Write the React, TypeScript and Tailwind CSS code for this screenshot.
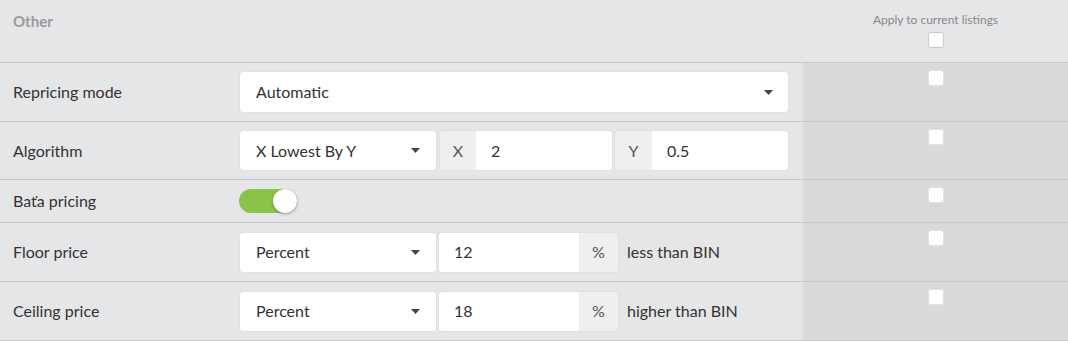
import React from "react";

const Caret = () => (
  <svg width="9" height="5" viewBox="0 0 9 5" className="shrink-0">
    <path d="M0 0 H9 L4.5 5 Z" fill="#444" />
  </svg>
);

const Check = ({ bordered = false }: { bordered?: boolean }) => (
  <div
    className={`w-[16px] h-[16px] rounded-[3px] bg-white ${
      bordered ? "border border-[#c9c9c9]" : "border border-[#e2e2e2]"
    }`}
  />
);

const Select = ({ value, w, h = "h-[41px]", pr = "pr-[15px]" }: { value: string; w: string; h?: string; pr?: string }) => (
  <div
    className={`${w} ${h} bg-white rounded-[4px] border border-[#e0e0e0] flex items-center justify-between pl-[16px] ${pr}`}
  >
    <span>{value}</span>
    <Caret />
  </div>
);

const Row = ({
  label,
  children,
  h = "h-[57px]",
  check = "pt-[7px]",
}: {
  label: string;
  children: React.ReactNode;
  h?: string;
  check?: string;
}) => (
  <div className={`flex border-b border-[#c7c8ca] ${h}`}>
    <div className="w-[239px] pl-[13px] flex items-center">{label}</div>
    <div className="w-[550px] flex items-center">{children}</div>
    <div className="w-[14px]" />
    <div className={`flex-1 bg-[#dadada] flex justify-center ${check}`}>
      <Check />
    </div>
  </div>
);

export default function App() {
  return (
    <div
      className="w-[1068px] h-[341px] bg-[#e5e6e8] text-[#333] text-[16px] overflow-hidden"
      style={{ fontFamily: "Lato, 'Open Sans', sans-serif" }}
    >
      <div className="flex h-[63px] border-b border-[#c7c8ca]">
        <div className="w-[803px] pl-[13px] pt-[10px] text-[15px] font-bold text-[#9a9a9a]">Other</div>
        <div className="flex-1 flex flex-col items-center pt-[12px]">
          <span className="text-[12px] text-[#888] leading-[16px]">Apply to current listings</span>
          <div className="mt-[4px]">
            <Check bordered />
          </div>
        </div>
      </div>

      <Row label="Repricing mode" h="h-[59px]">
        <Select value="Automatic" w="w-[550px]" h="h-[42px]" />
      </Row>

      <Row label="Algorithm" h="h-[58px]">
        <Select value="X Lowest By Y" w="w-[198px]" pr="pr-[16px]" />
        <div className="ml-[2px] flex h-[41px] w-[174px] rounded-[4px] overflow-hidden border border-[#e0e0e0]">
          <div className="w-[36px] bg-[#efefef] flex items-center justify-center text-[#555]">X</div>
          <div className="flex-1 bg-white flex items-center pl-[15px]">2</div>
        </div>
        <div className="ml-[1px] flex h-[41px] w-[175px] rounded-[4px] overflow-hidden border border-[#e0e0e0]">
          <div className="w-[37px] bg-[#efefef] flex items-center justify-center text-[#555]">Y</div>
          <div className="flex-1 bg-white flex items-center pl-[15px]">0.5</div>
        </div>
      </Row>

      <Row label="Baťa pricing" h="h-[43px]" check="pt-[7px]">
        <div className="w-[58px] h-[24px] rounded-full bg-[#8bc34a] flex justify-end">
          <div className="w-[24px] h-[24px] rounded-full bg-white shadow-[0_1px_3px_rgba(0,0,0,0.35)]" />
        </div>
      </Row>

      <Row label="Floor price" h="h-[59px]">
        <Select value="Percent" w="w-[198px]" pr="pr-[16px]" />
        <div className="ml-[1px] flex h-[41px] w-[181px] rounded-[4px] overflow-hidden border border-[#e0e0e0]">
          <div className="flex-1 bg-white flex items-center pl-[15px]">12</div>
          <div className="w-[39px] bg-[#efefef] flex items-center justify-center text-[#555]">%</div>
        </div>
        <span className="ml-[8px]">less than BIN</span>
      </Row>

      <Row label="Ceiling price" h="h-[59px]">
        <Select value="Percent" w="w-[198px]" pr="pr-[16px]" />
        <div className="ml-[1px] flex h-[41px] w-[181px] rounded-[4px] overflow-hidden border border-[#e0e0e0]">
          <div className="flex-1 bg-white flex items-center pl-[15px]">18</div>
          <div className="w-[39px] bg-[#efefef] flex items-center justify-center text-[#555]">%</div>
        </div>
        <span className="ml-[8px]">higher than BIN</span>
      </Row>
    </div>
  );
}
